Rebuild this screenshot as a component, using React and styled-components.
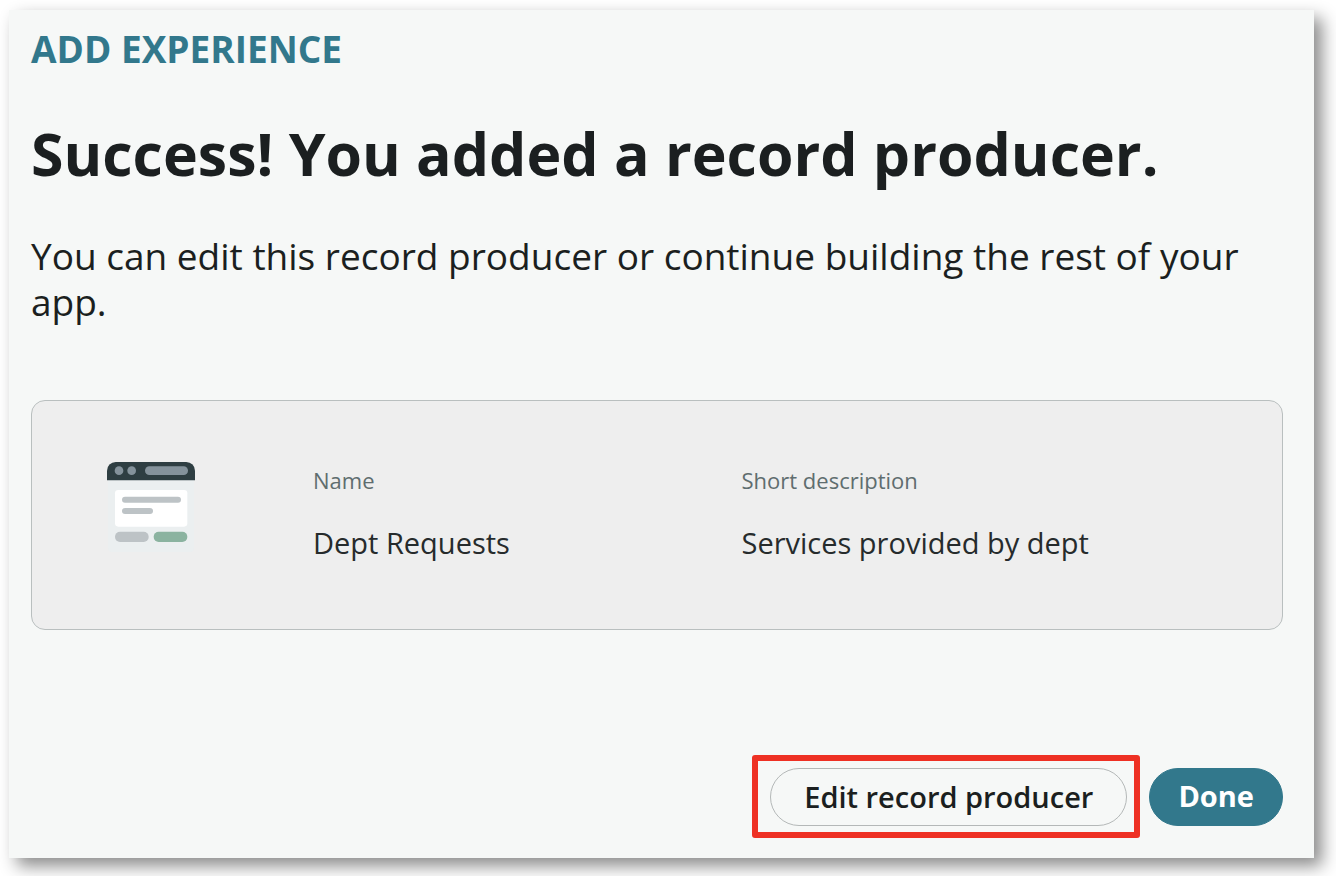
import React from "react";
import styled, { createGlobalStyle } from "styled-components";

const Global = createGlobalStyle`
  *, *::before, *::after { box-sizing: border-box; }
  body { margin: 0; background: #fff; color: #1b1f20; font-family: "Open Sans", "Noto Sans", sans-serif; }
`;

const Page = styled.div`
  min-height: 100vh;
  padding: 10px 22px 18px 9px;
  display: flex;
`;

const Dialog = styled.main`
  flex: 1;
  min-width: 0;
  display: flex;
  flex-direction: column;
  padding: 15px 31px 20px 22px;
  background: #f6f8f7;
  box-shadow: 8px 8px 16px rgba(0, 0, 0, 0.46);
`;

const Eyebrow = styled.p`
  margin: 0;
  color: #32788c;
  font-size: 37px;
  font-weight: 700;
  line-height: 48px;
`;

const Title = styled.h1`
  margin: 40px 0 0;
  font-size: 59px;
  font-weight: 700;
  line-height: 80px;
`;

const Lead = styled.p`
  margin: 40px 0 0;
  font-size: 37px;
  line-height: 46px;
`;

const Card = styled.section`
  margin-top: 75px;
  padding: 61px 112px 64px 75px;
  display: grid;
  grid-template-columns: 206px 1fr;
  align-items: start;
  border: 1px solid #b9bfbf;
  border-radius: 14px;
  background: #eeeeee;
`;

const WindowIcon = styled.svg`
  display: block;
  width: 88px;
  height: 90px;
`;

const Details = styled.dl`
  margin: 0;
  display: grid;
  grid-template-columns: 1fr 1fr;
`;

const Label = styled.dt`
  color: #5f6d6f;
  font-size: 22px;
  line-height: 36px;
`;

const Value = styled.dd`
  margin: 23px 0 0;
  color: #262b2c;
  font-size: 29px;
  line-height: 44px;
`;

const Actions = styled.footer`
  margin-top: auto;
  padding-top: 40px;
  display: flex;
  justify-content: flex-end;
  align-items: center;
  gap: 9px;
`;

const Highlight = styled.div`
  padding: 7px 7px 6px 12px;
  border: 6px solid #ee3124;
  border-radius: 3px;
`;

const Button = styled.button`
  display: block;
  height: 58px;
  padding: 0 ${(p) => (p.$primary ? 28 : 33)}px 2px;
  border: 1px solid ${(p) => (p.$primary ? "#32788c" : "#b4b8b8")};
  border-radius: 29px;
  background: ${(p) => (p.$primary ? "#32788c" : "transparent")};
  color: ${(p) => (p.$primary ? "#ffffff" : "#1b1f20")};
  font-family: inherit;
  font-size: 29px;
  font-weight: ${(p) => (p.$primary ? 700 : 600)};
  cursor: pointer;
`;

export default function App() {
  return (
    <>
      <Global />
      <Page>
        <Dialog>
          <Eyebrow>ADD EXPERIENCE</Eyebrow>
          <Title>Success! You added a record producer.</Title>
          <Lead>You can edit this record producer or continue building the rest of your app.</Lead>
          <Card>
            <WindowIcon viewBox="0 0 264 270" aria-hidden="true">
              <path d="M3 54H261V258a12 12 0 0 1-12 12H15a12 12 0 0 1-12-12Z" fill="#ebeff0" />
              <path d="M0 55V26A26 26 0 0 1 26 0H238A26 26 0 0 1 264 26V55Z" fill="#2e3e42" />
              <circle cx="36" cy="26" r="13" fill="#84929b" />
              <circle cx="74" cy="26" r="13" fill="#84929b" />
              <rect x="114" y="13" width="129" height="26" rx="13" fill="#84929b" />
              <rect x="24" y="84" width="217" height="110" rx="10" fill="#ffffff" />
              <rect x="45" y="104" width="177" height="18" rx="9" fill="#bdc3c6" />
              <rect x="45" y="138" width="93" height="18" rx="9" fill="#bdc3c6" />
              <rect x="24" y="209" width="101" height="31" rx="15" fill="#bdc3c6" />
              <rect x="140" y="209" width="101" height="31" rx="15" fill="#8bb3a0" />
            </WindowIcon>
            <Details>
              <div>
                <Label>Name</Label>
                <Value>Dept Requests</Value>
              </div>
              <div>
                <Label>Short description</Label>
                <Value>Services provided by dept</Value>
              </div>
            </Details>
          </Card>
          <Actions>
            <Highlight>
              <Button type="button">Edit record producer</Button>
            </Highlight>
            <Button type="button" $primary>Done</Button>
          </Actions>
        </Dialog>
      </Page>
    </>
  );
}
